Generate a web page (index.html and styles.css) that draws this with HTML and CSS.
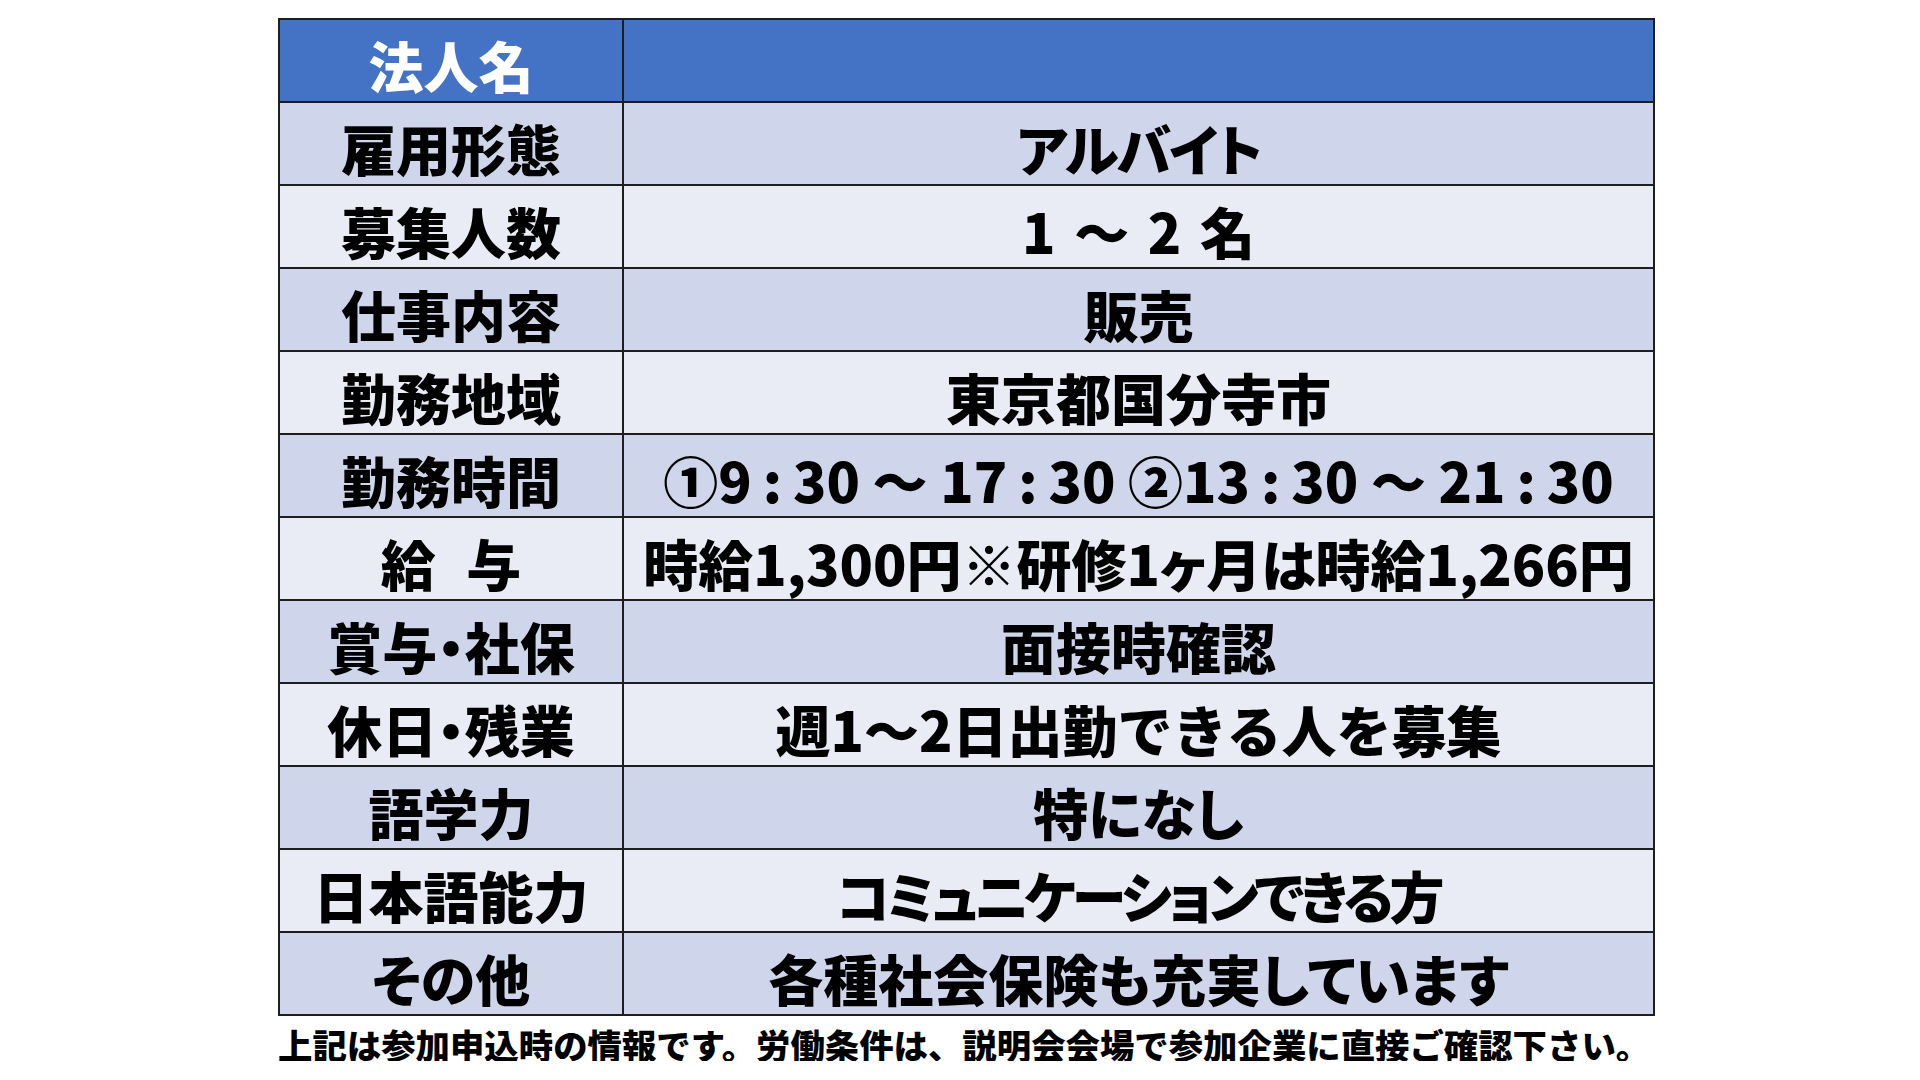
FILE: index.html
```html
<!DOCTYPE html>
<html lang="ja">
<head>
<meta charset="utf-8">
<title>募集要項</title>
<link rel="stylesheet" href="styles.css">
</head>
<body>
<div class="page">
  <table class="jobs">
    <colgroup><col class="c-label"><col class="c-value"></colgroup>
    <tr class="head"><th>法人名</th><td></td></tr>
    <tr class="dark"><th>雇用形態</th><td class="prop tight">アルバイト</td></tr>
    <tr class="light"><th>募集人数</th><td class="spaced">1 ～ 2 名</td></tr>
    <tr class="dark"><th>仕事内容</th><td>販売</td></tr>
    <tr class="light"><th>勤務地域</th><td>東京都国分寺市</td></tr>
    <tr class="dark"><th>勤務時間</th><td>①9<span class="colon">:</span>30 ～ 17<span class="colon">:</span>30 ②13<span class="colon">:</span>30 ～ 21<span class="colon">:</span>30</td></tr>
    <tr class="light"><th>給<span class="gap"></span>与</th><td class="prop">時給1,300円※研修1ヶ月は時給1,266円</td></tr>
    <tr class="dark"><th class="prop">賞与・社保</th><td>面接時確認</td></tr>
    <tr class="light"><th class="prop">休日・残業</th><td>週1～2日出勤できる人を募集</td></tr>
    <tr class="dark"><th>語学力</th><td class="prop">特になし</td></tr>
    <tr class="light"><th>日本語能力</th><td class="prop tighter">コミュニケーションできる方</td></tr>
    <tr class="dark"><th class="prop">その他</th><td class="prop">各種社会保険も充実しています</td></tr>
  </table>
  <p class="note">上記は参加申込時の情報です。労働条件は、説明会会場で参加企業に直接ご確認下さい。</p>
</div>
</body>
</html>
```

FILE: styles.css
```css
html, body {
  margin: 0;
  padding: 0;
  background: #ffffff;
}

body {
  font-family: "Noto Sans CJK JP", "Noto Sans", sans-serif;
  color: #000000;
}

.page {
  padding: 18px 0 0 278px;
}

.jobs {
  border-collapse: collapse;
  width: 1375px;
  table-layout: fixed;
}

.c-label { width: 344px; }
.c-value { width: 1031px; }

.jobs tr {
  height: 83px;
}

.jobs th,
.jobs td {
  border: 2px solid #1e1e1e;
  padding: 8px 0 0 0;
  text-align: center;
  vertical-align: middle;
  font-size: 55px;
  font-weight: 900;
  line-height: 1;
  white-space: nowrap;
}

.jobs .prop {
  font-feature-settings: "palt";
}

.jobs .tight {
  letter-spacing: -2px;
}

.jobs .tighter {
  letter-spacing: -4px;
}

.jobs .spaced {
  word-spacing: 6px;
}

.colon {
  margin: 0 0.2em;
}

.gap {
  display: inline-block;
  width: 0.55em;
}

.head th,
.head td {
  background: #4472c4;
  color: #ffffff;
}

.dark th,
.dark td {
  background: #cfd5ea;
}

.light th,
.light td {
  background: #e9ebf5;
}

.note {
  margin: 11px 0 0 0;
  font-size: 34.4px;
  font-weight: 900;
  line-height: 1;
  white-space: nowrap;
}
```
